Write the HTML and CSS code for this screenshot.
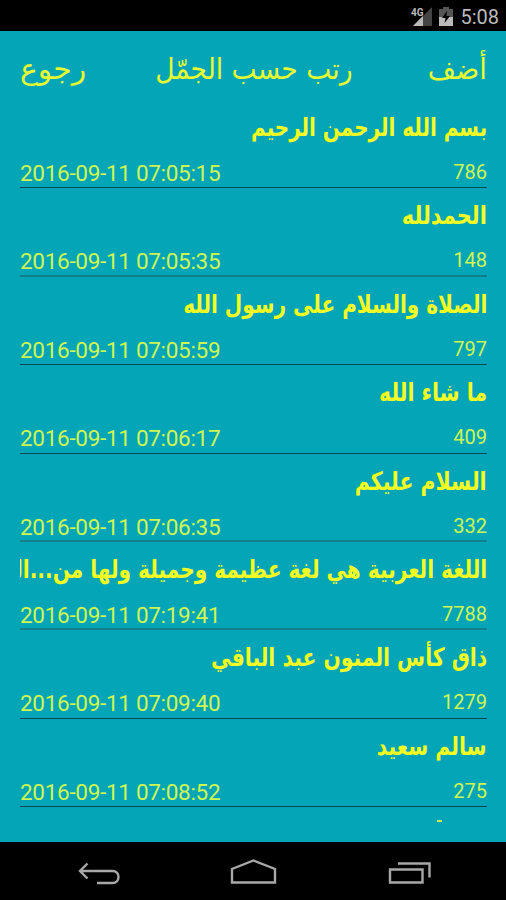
FILE: index.html
```html
<!DOCTYPE html>
<html lang="ar">
<head>
    <meta charset="UTF-8">
    <meta name="viewport" content="width=device-width, initial-scale=1.0">
    <title>حساب الجمّل</title>
    <link rel="stylesheet" href="styles.css">
</head>
<body>
    <div class="status-bar">
        <svg class="signal" width="22" height="20" viewBox="0 0 22 20">
            <path d="M21 0V19H2Z" fill="#444"/>
            <path d="M12 9V19H2Z" fill="#bbb"/>
            <path d="M0 0H12V9H0Z" fill="#000"/>
            <text class="signal-text" x="0" y="9">4G</text>
        </svg>
        <svg class="battery" width="14" height="19" viewBox="0 0 14 19">
            <path d="M0 2H4V0H10V2H14V10H0Z" fill="#555"/>
            <path d="M0 10H14V19H0Z" fill="#bbb"/>
            <path d="M8 4L3 11H6.5L5.500 16L11 9H7.500Z" fill="#000"/>
        </svg>
        <span class="clock">5:08</span>
    </div>

    <main class="screen">
        <nav class="menu">
            <span class="menu-item back">رجوع</span>
            <span class="menu-item sort">رتب حسب الجمّل</span>
            <span class="menu-item add">أضف</span>
        </nav>

        <div class="list">
            <div class="row sharp">
                <div class="phrase" dir="rtl"><span style="--fit: .831">بسم الله الرحمن الرحيم</span></div>
                <div class="info"><span class="date">2016-09-11 07:05:15</span><span class="value">786</span></div>
            </div>
            <div class="row">
                <div class="phrase" dir="rtl"><span style="--fit: .87">الحمدلله</span></div>
                <div class="info"><span class="date">2016-09-11 07:05:35</span><span class="value">148</span></div>
            </div>
            <div class="row sharp">
                <div class="phrase" dir="rtl"><span style="--fit: .835">الصلاة والسلام على رسول الله</span></div>
                <div class="info"><span class="date">2016-09-11 07:05:59</span><span class="value">797</span></div>
            </div>
            <div class="row sharp">
                <div class="phrase" dir="rtl"><span style="--fit: .85">ما شاء الله</span></div>
                <div class="info"><span class="date">2016-09-11 07:06:17</span><span class="value">409</span></div>
            </div>
            <div class="row">
                <div class="phrase" dir="rtl"><span style="--fit: .853">السلام عليكم</span></div>
                <div class="info"><span class="date">2016-09-11 07:06:35</span><span class="value">332</span></div>
            </div>
            <div class="row">
                <div class="phrase" dir="rtl"><span style="--fit: .838">اللغة العربية هي لغة عظيمة وجميلة ولها من<i class="dots">...</i>ال&zwj;</span></div>
                <div class="info"><span class="date">2016-09-11 07:19:41</span><span class="value">7788</span></div>
            </div>
            <div class="row sharp">
                <div class="phrase" dir="rtl"><span style="--fit: .847">ذاق كأس المنون عبد الباقي</span></div>
                <div class="info"><span class="date">2016-09-11 07:09:40</span><span class="value">1279</span></div>
            </div>
            <div class="row sharp">
                <div class="phrase" dir="rtl"><span style="--fit: .848">سالم سعيد</span></div>
                <div class="info"><span class="date">2016-09-11 07:08:52</span><span class="value">275</span></div>
            </div>
            <div class="next-row"></div>
        </div>
    </main>

    <div class="nav-bar">
        <svg width="506" height="58" viewBox="0 0 506 58" fill="none" stroke="#a8a8a8" stroke-width="2.400">
            <path d="M87.500 22.500L80 30L87.500 37.500M80 30H112.500C120.500 30 120.500 42 112.500 42H97" transform="translate(0 -1)"/>
            <path d="M232 40.500V27L253.500 18.500L275 27V40.500Z"/>
            <path d="M390 27.500H422.500V40.500H390ZM398 21.500H429.500V35.500"/>
        </svg>
    </div>
</body>
</html>
```

FILE: styles.css
```css
* {
    margin: 0;
    padding: 0;
    box-sizing: border-box;
}

body {
    width: 506px;
    height: 900px;
    display: flex;
    flex-direction: column;
    overflow: hidden;
    background: #000;
    font-family: Roboto, 'DejaVu Sans', sans-serif;
}

.status-bar {
    height: 31px;
    display: flex;
    justify-content: flex-end;
    align-items: center;
    padding: 2px 7px 0 0;
}

.signal {
    margin-right: 6px;
}

.signal-text {
    font-size: 10px;
    font-weight: bold;
    fill: #bbb;
}

.battery {
    margin-right: 7px;
}

.clock {
    font-size: 20px;
    color: #bbb;
}

.screen {
    height: 811px;
    padding: 0 19px 0 20px;
    background: #04a5b7;
    overflow: hidden;
}

.menu {
    height: 69px;
    display: flex;
    justify-content: space-between;
}

.menu-item {
    font-family: 'DejaVu Sans', sans-serif;
    font-size: 29px;
    line-height: 76px;
    color: #e6fa32;
    white-space: nowrap;
}

.back {
    transform: scaleX(1.03);
    transform-origin: left;
}

.sort {
    transform: scaleX(.915);
}

.add {
    transform: scaleX(.94);
    transform-origin: right;
}

.row {
    height: 88.400px;
    border-bottom: 2px solid #127f8c;
}

.row.sharp {
    border-bottom: 1px solid #0b4a54;
}

.phrase {
    height: 60px;
    font-family: 'DejaVu Sans', sans-serif;
    font-size: 24px;
    font-weight: bold;
    line-height: 57px;
    color: #f2fb24;
    white-space: nowrap;
    overflow: hidden;
}

/* narrows each phrase towards its right edge */
.phrase span {
    display: inline-block;
    transform: scale(var(--fit), 1.06);
    transform-origin: right;
}

.dots {
    font-style: normal;
    letter-spacing: -4px;
}

.info {
    display: flex;
    justify-content: space-between;
    line-height: 27px;
    color: #cdf653;
}

.date {
    font-size: 22.500px;
    letter-spacing: -.3px;
}

.value {
    font-size: 20px;
    line-height: 25px;
}

.next-row {
    width: 5px;
    height: 2px;
    margin: 13px 45px 0 auto;
    background: #c5ee55;
}

.nav-bar {
    height: 58px;
}
```
